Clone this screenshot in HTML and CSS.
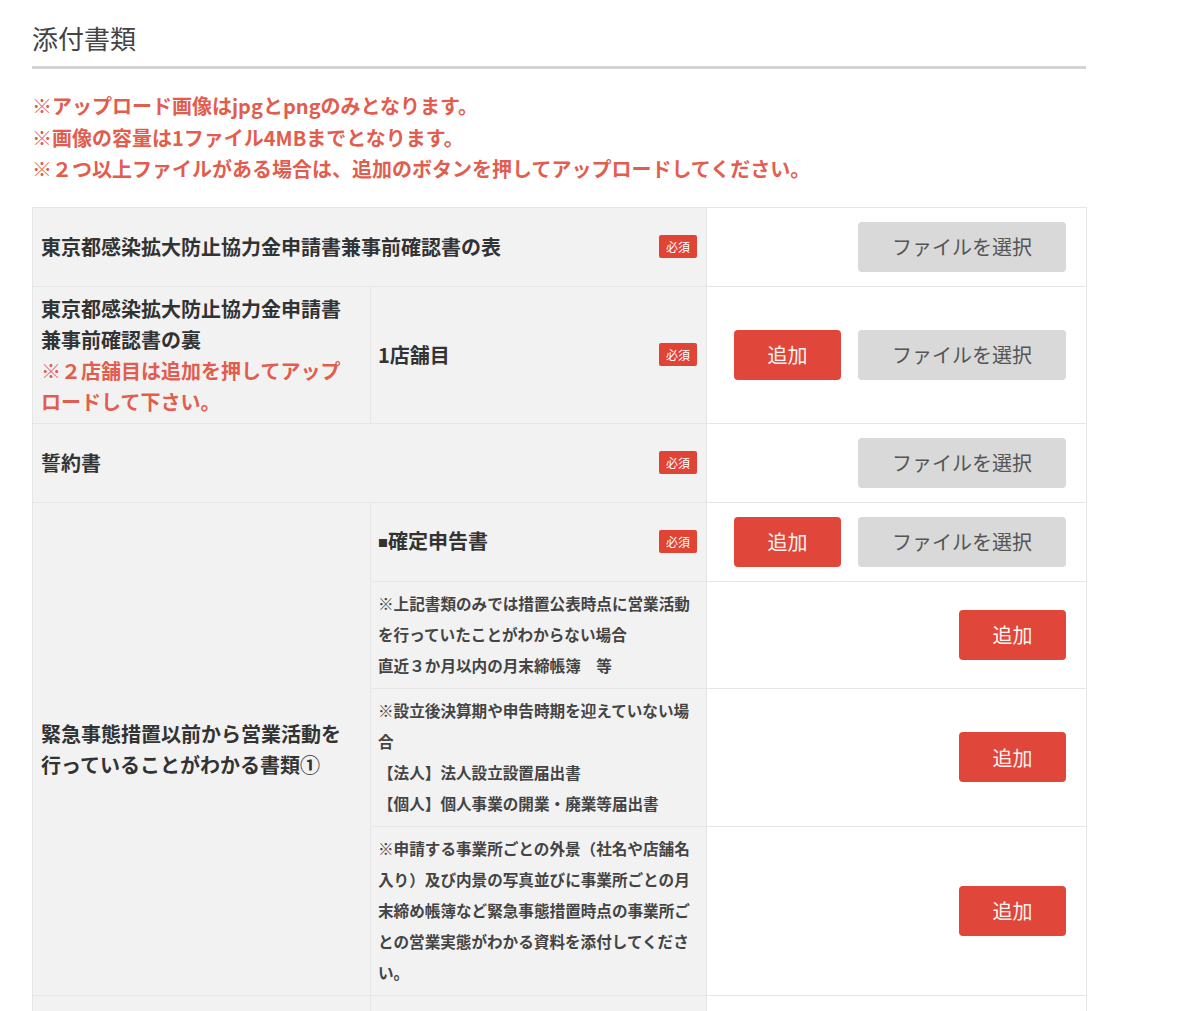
FILE: index.html
```html
<!DOCTYPE html>
<html lang="ja">
<head>
<meta charset="utf-8">
<title>添付書類</title>
<link rel="stylesheet" href="styles.css">
</head>
<body>
<h2 class="title">添付書類</h2>
<div class="notes">
  <p>※アップロード画像はjpgとpngのみとなります。</p>
  <p>※画像の容量は1ファイル4MBまでとなります。</p>
  <p>※２つ以上ファイルがある場合は、追加のボタンを押してアップロードしてください。</p>
</div>
<table class="docs">
  <colgroup>
    <col class="c1">
    <col class="c2">
    <col class="c3">
  </colgroup>
  <tr class="r-btn">
    <td class="lbl span" colspan="2"><div class="lblrow"><span>東京都感染拡大防止協力金申請書兼事前確認書の表</span><span class="req">必須</span></div></td>
    <td class="val"><div class="acts"><button class="file">ファイルを選択</button></div></td>
  </tr>
  <tr>
    <td class="lbl c1cell">東京都感染拡大防止協力金申請書兼事前確認書の裏<br><span class="red">※２店舗目は追加を押してアップロードして下さい。</span></td>
    <td class="lbl c2cell"><div class="lblrow"><span>1店舗目</span><span class="req">必須</span></div></td>
    <td class="val"><div class="acts"><button class="add">追加</button><button class="file">ファイルを選択</button></div></td>
  </tr>
  <tr class="r-btn">
    <td class="lbl span" colspan="2"><div class="lblrow"><span>誓約書</span><span class="req">必須</span></div></td>
    <td class="val"><div class="acts"><button class="file">ファイルを選択</button></div></td>
  </tr>
  <tr class="r-btn">
    <td class="lbl c1cell" rowspan="4">緊急事態措置以前から営業活動を行っていることがわかる書類①</td>
    <td class="lbl c2cell"><div class="lblrow"><span><span class="sq">■</span>確定申告書</span><span class="req">必須</span></div></td>
    <td class="val"><div class="acts"><button class="add">追加</button><button class="file">ファイルを選択</button></div></td>
  </tr>
  <tr>
    <td class="lbl c2cell small">※上記書類のみでは措置公表時点に営業活動を行っていたことがわからない場合<br>直近３か月以内の月末締帳簿　等</td>
    <td class="val"><div class="acts"><button class="add">追加</button></div></td>
  </tr>
  <tr>
    <td class="lbl c2cell small">※設立後決算期や申告時期を迎えていない場合<br>【法人】法人設立設置届出書<br>【個人】個人事業の開業・廃業等届出書</td>
    <td class="val"><div class="acts"><button class="add">追加</button></div></td>
  </tr>
  <tr>
    <td class="lbl c2cell small">※申請する事業所ごとの外景（社名や店舗名入り）及び内景の写真並びに事業所ごとの月末締め帳簿など緊急事態措置時点の事業所ごとの営業実態がわかる資料を添付してください。</td>
    <td class="val"><div class="acts"><button class="add">追加</button></div></td>
  </tr>
  <tr class="r-btn">
    <td class="lbl c1cell">&nbsp;</td>
    <td class="lbl c2cell">&nbsp;</td>
    <td class="val">&nbsp;</td>
  </tr>
</table>
</body>
</html>
```

FILE: styles.css
```css
html, body {
  background: #ffffff;
}
body {
  margin: 0;
  padding: 20px 32px 0;
  width: 1054px;
  font-family: "Noto Sans CJK JP", "Noto Sans", sans-serif;
  color: #333333;
}
.title {
  margin: 0;
  font-size: 26px;
  font-weight: 400;
  line-height: 36px;
  color: #444444;
  padding-bottom: 10px;
  border-bottom: 3px solid #d3d3d3;
}
.notes {
  margin-top: 21px;
}
.notes p {
  margin: 0;
  font-size: 20px;
  font-weight: 700;
  line-height: 31.5px;
  color: #e35d4f;
}
.docs {
  margin-top: 22px;
  width: 1054px;
  table-layout: fixed;
  border-collapse: collapse;
  border: 1px solid #e8e8e8;
}
.docs col.c1 { width: 338px; }
.docs col.c2 { width: 336px; }
.docs col.c3 { width: 380px; }
.docs td {
  border: 1px solid #e6e6e6;
  vertical-align: middle;
  line-height: 31px;
  font-size: 20px;
}
.lbl {
  background: #f2f2f2;
  font-weight: 700;
  color: #333333;
  padding: 6px 9px 6px 8px;
}
.c1cell {
  padding: 6px 12px 6px 8px;
}
.c2cell {
  padding: 6px 9px 6px 7px;
}
.small {
  font-size: 15.6px !important;
  color: #444444;
  padding-top: 6.5px;
  padding-bottom: 6.5px;
  padding-right: 11px;
}
.red {
  color: #e35d4f;
}
.lblrow {
  display: flex;
  align-items: center;
  justify-content: space-between;
}
.sq {
  font-size: 10px;
  vertical-align: 2px;
}
.req {
  display: inline-flex;
  align-items: center;
  justify-content: center;
  width: 38px;
  height: 23px;
  background: #df4434;
  color: #ffffff;
  font-size: 12px;
  font-weight: 400;
  line-height: 1;
  border-radius: 2px;
  flex-shrink: 0;
}
.val {
  background: #ffffff;
  padding: 14px 20px;
}
.acts {
  display: flex;
  justify-content: flex-end;
  align-items: center;
  gap: 17px;
}
button {
  font-family: "Noto Sans CJK JP", "Noto Sans", sans-serif;
  border: none;
  height: 50px;
  border-radius: 4px;
  font-size: 20px;
  font-weight: 400;
  padding: 0;
  cursor: pointer;
}
.file {
  width: 208px;
  background: #d9d9d9;
  color: #555555;
}
.add {
  width: 107px;
  background: #e0463a;
  color: #fff4f0;
}
```
